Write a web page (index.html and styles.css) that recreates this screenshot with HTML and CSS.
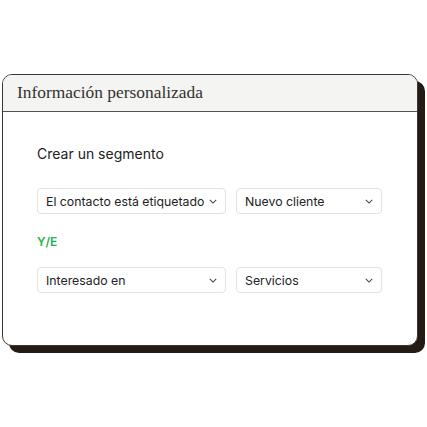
FILE: index.html
```html
<!DOCTYPE html>
<html lang="es">
<head>
<meta charset="utf-8">
<link rel="stylesheet" href="styles.css">
</head>
<body>
<div class="card">
  <div class="card-header">Información personalizada</div>
  <div class="card-body">
    <div class="title">Crear un segmento</div>
    <div class="row first">
      <div class="select wide"><span>El contacto está etiquetado</span><svg class="chev" viewBox="0 0 10 6"><path d="M1 1l4 4 4-4"/></svg></div>
      <div class="select narrow"><span>Nuevo cliente</span><svg class="chev" viewBox="0 0 10 6"><path d="M1 1l4 4 4-4"/></svg></div>
    </div>
    <div class="and">Y/E</div>
    <div class="row second">
      <div class="select wide"><span>Interesado en</span><svg class="chev" viewBox="0 0 10 6"><path d="M1 1l4 4 4-4"/></svg></div>
      <div class="select narrow"><span>Servicios</span><svg class="chev" viewBox="0 0 10 6"><path d="M1 1l4 4 4-4"/></svg></div>
    </div>
  </div>
</div>
</body>
</html>
```
FILE: styles.css
```css
html, body { margin: 0; padding: 0; background: #fff; }
body { width: 427px; height: 427px; padding-top: 74px; padding-left: 2px; box-sizing: border-box; font-family: Inter, "Liberation Sans", sans-serif; color: #222; }
.card {
  width: 416px; height: 272px; box-sizing: border-box;
  border: 1.5px solid #3a3633; border-radius: 10px; background: #fff;
  box-shadow: 7px 7px 0 #241b14; overflow: hidden;
}
.card-header {
  height: 37px; box-sizing: border-box; background: #f4f4f2;
  border-bottom: 1.5px solid #55514d;
  font-family: "Liberation Serif", serif; font-size: 17.4px; color: #333;
  padding: 7px 0 0 14px;
}
.card-body { padding: 32px 0 0 34px; }
.title { font-size: 14px; color: #222; height: 20px; line-height: 20px; }
.row { display: flex; gap: 10px; }
.row.first { margin-top: 24px; }
.row.second { margin-top: 18px; }
.select {
  height: 26px; box-sizing: border-box; border: 1px solid #e4e2de; border-radius: 4px;
  display: flex; align-items: center; justify-content: space-between;
  padding: 0 8px 0 8px; font-size: 12.3px; color: #222;
}
.wide { width: 189px; }
.narrow { width: 146px; }
.chev { width: 8px; height: 5px; fill: none; stroke: #444; stroke-width: 1.3; }
.and { color: #1fb14c; font-size: 12px; font-weight: 600; margin-top: 21px; height: 14px; line-height: 14px; }
```
